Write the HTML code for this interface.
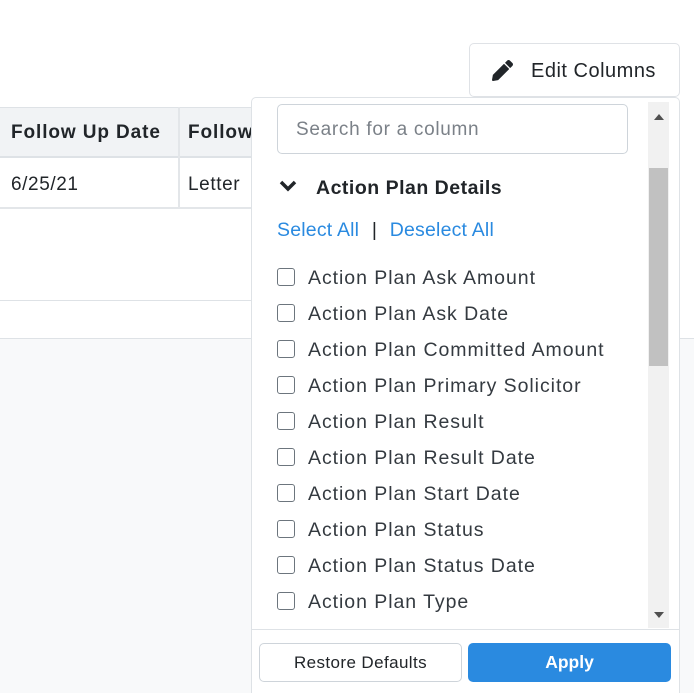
<!DOCTYPE html>
<html style="width:694px;height:693px;overflow:hidden"><head><style>
*{box-sizing:border-box;margin:0;padding:0}
body{width:694px;height:693px;overflow:hidden;background:#fff;font-family:"Liberation Sans",sans-serif;color:#212529;position:relative}
.abs{position:absolute}
.th{top:107px;height:51px;background:#f1f3f5;border-top:1px solid #dee2e6;border-bottom:2px solid #dee2e6}
.td{top:158px;height:51px;border-bottom:2px solid #e3e6e9}
.item{position:absolute;left:277px;font-size:19.5px;color:#343a40;height:24px;line-height:24px}
.item i{position:absolute;left:0;top:2px;width:18px;height:18px;border:1.5px solid #6c757d;border-radius:3px}
.item span{position:absolute;left:31px;white-space:nowrap;letter-spacing:0.95px}
</style></head><body>
<div class="abs" style="left:0;top:338px;width:694px;height:355px;background:#f8f9fa;border-top:1px solid #dee2e6"></div>
<div class="abs" style="left:0;top:300px;width:251px;height:1px;background:#dee2e6"></div>
<div class="abs th" style="left:0;width:251px"></div>
<div class="abs" style="left:11px;top:107px;font-weight:bold;font-size:19px;line-height:52px;letter-spacing:0.9px">Follow Up Date</div>
<div class="abs" style="left:178px;top:107px;width:2px;height:102px;background:#e3e6e9"></div>
<div class="abs" style="left:188px;top:107px;font-weight:bold;font-size:19px;line-height:52px;letter-spacing:0.9px">Follow</div>
<div class="abs td" style="left:0;width:251px"></div>
<div class="abs" style="left:11px;top:158px;font-size:19px;line-height:54px;letter-spacing:0.6px">6/25/21</div>
<div class="abs" style="left:188px;top:158px;font-size:19px;line-height:54px;letter-spacing:0.6px">Letter</div>

<div class="abs" style="left:469px;top:43px;width:211px;height:54px;border:1.5px solid #dfe2e6;border-radius:5px;background:#fff"></div>
<svg class="abs" style="left:492px;top:60px" width="21" height="21" viewBox="0 0 512 512"><path fill="#212529" d="M497.9 142.1l-46.1 46.1c-4.7 4.7-12.3 4.7-17 0l-111-111c-4.7-4.7-4.7-12.3 0-17l46.1-46.1c18.7-18.7 49.1-18.7 67.9 0l60.1 60.1c18.8 18.7 18.8 49.1 0 67.9zM284.2 99.8L21.6 362.4.4 483.9c-2.9 16.4 11.4 30.6 27.8 27.8l121.5-21.3 262.6-262.6c4.7-4.7 4.7-12.3 0-17l-111-111c-4.8-4.7-12.4-4.7-17.1 0z"/></svg>
<div class="abs" style="left:531px;top:57px;font-size:20px;line-height:28px;letter-spacing:0.5px">Edit Columns</div>

<div class="abs" style="left:251px;top:97px;width:429px;height:596px;border:1.5px solid #dee2e6;border-bottom:none;border-radius:5px 5px 0 0;background:#fff"></div>
<div class="abs" style="left:648px;top:102px;width:21px;height:526px;background:#f1f1f1"></div>
<div class="abs" style="left:649px;top:168px;width:19px;height:198px;background:#c1c1c1"></div>
<div class="abs" style="left:654px;top:114px;width:0;height:0;border-left:5px solid transparent;border-right:5px solid transparent;border-bottom:6px solid #505050"></div>
<div class="abs" style="left:654px;top:612px;width:0;height:0;border-left:5px solid transparent;border-right:5px solid transparent;border-top:6px solid #505050"></div>

<div class="abs" style="left:277px;top:104px;width:351px;height:50px;border:1px solid #ced4da;border-radius:5px"></div>
<div class="abs" style="left:296px;top:104px;font-size:19px;line-height:52px;color:#7b8188;letter-spacing:0.7px">Search for a column</div>
<svg class="abs" style="left:279px;top:179px" width="18" height="14" viewBox="0 0 18 14"><path d="M2 3l7 7 7-7" stroke="#212529" stroke-width="3.5" fill="none"/></svg>
<div class="abs" style="left:316px;top:175px;font-size:19.5px;font-weight:bold;line-height:26px;letter-spacing:0.5px">Action Plan Details</div>
<div class="abs" style="left:277px;top:217px;font-size:19.5px;line-height:26px;color:#2a8ae0;letter-spacing:0.2px">Select All <span style="color:#212529;padding:0 7px">|</span> Deselect All</div>

<div class="item" style="top:266px"><i></i><span>Action Plan Ask Amount</span></div>
<div class="item" style="top:302px"><i></i><span>Action Plan Ask Date</span></div>
<div class="item" style="top:338px"><i></i><span>Action Plan Committed Amount</span></div>
<div class="item" style="top:374px"><i></i><span>Action Plan Primary Solicitor</span></div>
<div class="item" style="top:410px"><i></i><span>Action Plan Result</span></div>
<div class="item" style="top:446px"><i></i><span>Action Plan Result Date</span></div>
<div class="item" style="top:482px"><i></i><span>Action Plan Start Date</span></div>
<div class="item" style="top:518px"><i></i><span>Action Plan Status</span></div>
<div class="item" style="top:554px"><i></i><span>Action Plan Status Date</span></div>
<div class="item" style="top:590px"><i></i><span>Action Plan Type</span></div>

<div class="abs" style="left:252px;top:629px;width:427px;height:1px;background:#dee2e6"></div>
<div class="abs" style="left:259px;top:643px;width:203px;height:39px;border:1px solid #ced4da;border-radius:5px;text-align:center;font-size:17px;line-height:38px;letter-spacing:0.4px">Restore Defaults</div>
<div class="abs" style="left:468px;top:643px;width:203px;height:39px;background:#2a8ae0;border-radius:5px;text-align:center;font-size:17.5px;font-weight:bold;color:#fff;line-height:39px">Apply</div>
</body></html>
